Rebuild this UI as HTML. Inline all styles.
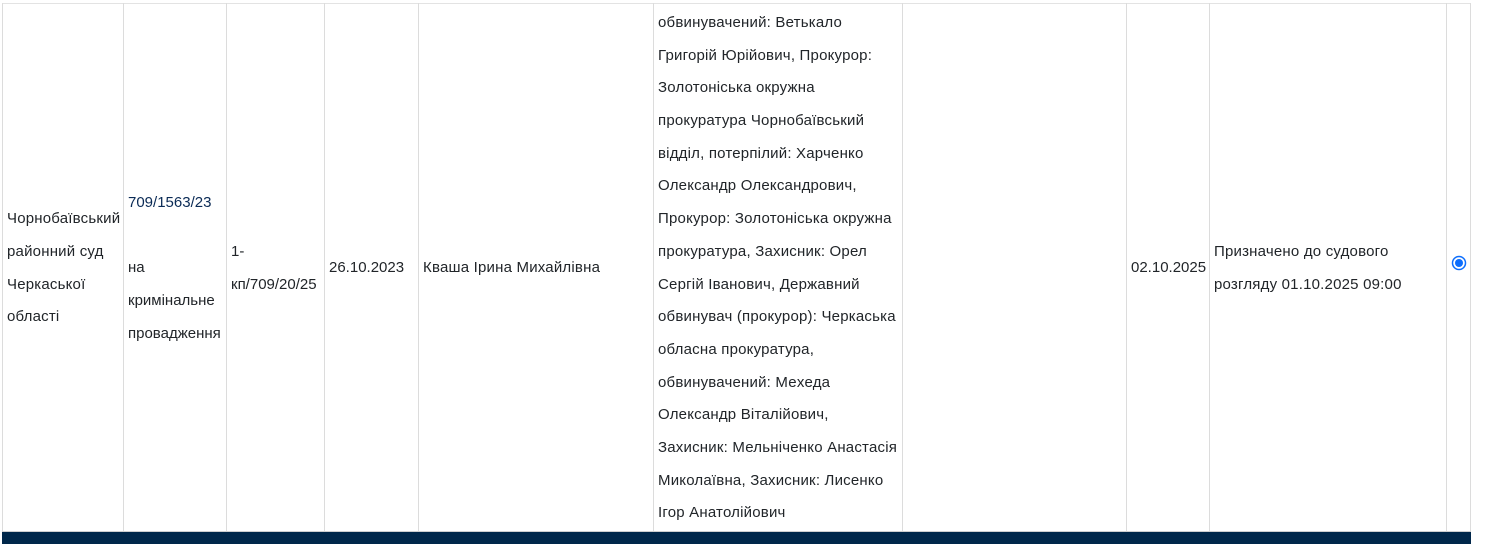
<!DOCTYPE html>
<html><head><meta charset="utf-8"><style>
body{margin:0;width:1488px;height:544px;background:#fff;position:relative;overflow:hidden;font-family:"Liberation Sans",Arial,sans-serif;font-size:15px;color:#212529}
.c{position:absolute;top:3px;height:528px;border-left:1px solid #dcdcdc;display:flex;align-items:center;box-sizing:border-box;padding-left:4px;padding-top:3px;line-height:32.7px;white-space:nowrap}
.top{position:absolute;left:2px;top:3px;width:1469px;height:1px;background:#e3e3e3}
.bar{position:absolute;left:2px;top:531px;width:1469px;height:13px;background:#00274a;border-top:1px solid #cfcfcf;box-sizing:border-box}
a{color:#0a2a55;text-decoration:none}
.w{letter-spacing:0.2px}
</style></head><body>
<div class="top"></div>
<div class="c w" style="left:2px;width:121px">Чорнобаївський<br>районний суд<br>Черкаської<br>області</div>
<div class="c" style="left:123px;width:103px"><div><a>709/1563/23</a><br><br>на<br>кримінальне<br>провадження</div></div>
<div class="c" style="left:226px;width:98px">1-<br>кп/709/20/25</div>
<div class="c" style="left:324px;width:94px">26.10.2023</div>
<div class="c w" style="left:418px;width:235px">Кваша Ірина Михайлівна</div>
<div class="c w" style="left:653px;width:249px"><div>обвинувачений: Ветькало<br>Григорій Юрійович, Прокурор:<br>Золотоніська окружна<br>прокуратура Чорнобаївський<br>відділ, потерпілий: Харченко<br>Олександр Олександрович,<br>Прокурор: Золотоніська окружна<br>прокуратура, Захисник: Орел<br>Сергій Іванович, Державний<br>обвинувач (прокурор): Черкаська<br>обласна прокуратура,<br>обвинувачений: Меxеда<br>Олександр Віталійович,<br>Захисник: Мельніченко Анастасія<br>Миколаївна, Захисник: Лисенко<br>Ігор Анатолійович</div></div>
<div class="c" style="left:902px;width:224px"></div>
<div class="c" style="left:1126px;width:83px">02.10.2025</div>
<div class="c w" style="left:1209px;width:237px">Призначено до судового<br>розгляду 01.10.2025 09:00</div>
<div class="c" style="left:1446px;width:25px;border-right:1px solid #dcdcdc;padding-left:4px;padding-top:0;padding-bottom:8px"><svg width="16" height="16"><circle cx="8" cy="8" r="6.5" fill="#fff" stroke="#0d6efd" stroke-width="1.5"/><circle cx="8" cy="8" r="4" fill="#0d6efd"/></svg></div>
<div class="bar"></div>
</body></html>
